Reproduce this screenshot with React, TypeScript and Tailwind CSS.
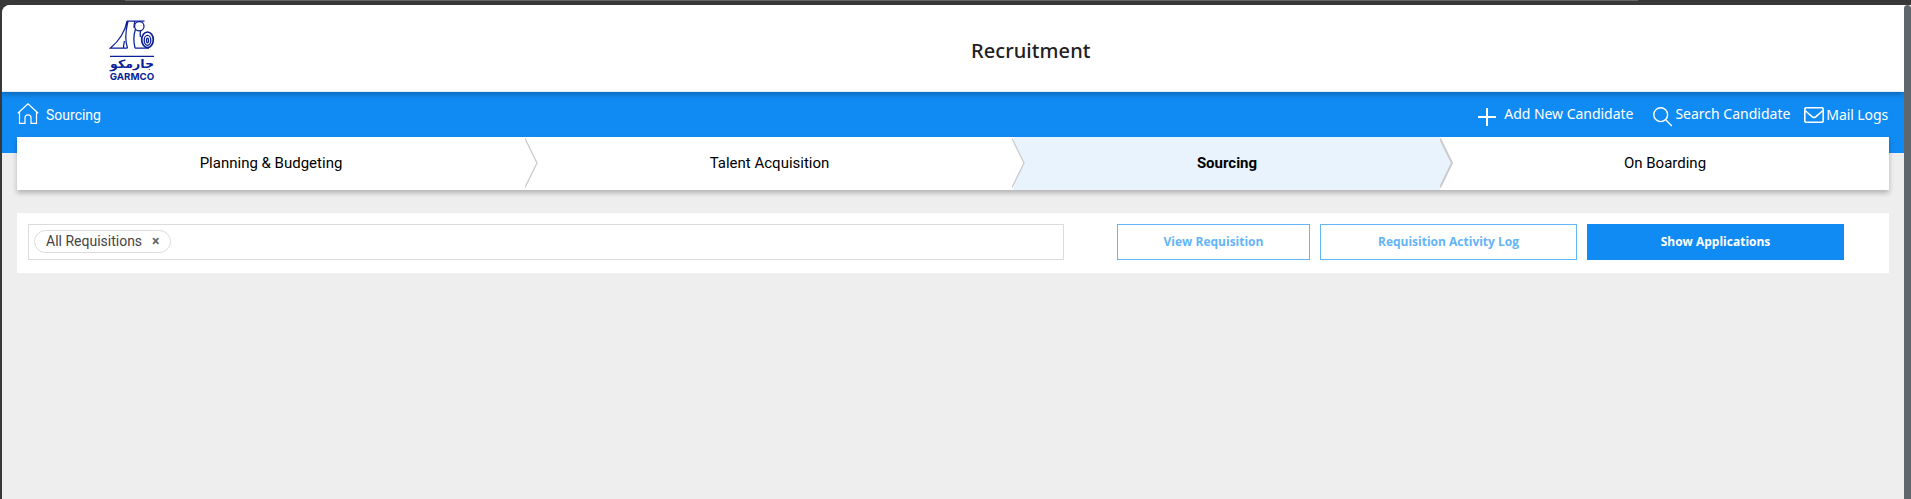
import React from "react";

function Logo() {
  return (
    <svg width="46" height="63" viewBox="0 0 46 63" fill="none" stroke="#0b1f97" strokeWidth="1.25">
      <path d="M18 2H35.500M18 2C16 13 10 22 1.500 29H18.500M19 2C16.500 12 16 22 18.500 29M26.500 10C24.500 16 24.500 23 26 29M14.500 29C14.500 26 14.800 25 15.500 22M26 29H40M26 2C25.200 4 25 7 25.200 9" />
      <circle cx="30.300" cy="7.200" r="4.700" />
      <path d="M31.500 12C31 14 31 16 31.500 18" />
      <ellipse cx="38.500" cy="20.800" rx="5.800" ry="7.800" strokeWidth="1.700" />
      <ellipse cx="38.500" cy="21.300" rx="3.300" ry="5" strokeWidth="1.300" />
      <ellipse cx="38.500" cy="21.500" rx="1" ry="2.300" strokeWidth="1.300" />
      <path d="M1 37.300H45" strokeWidth="1.300" />
      <text x="23" y="48.600" textAnchor="middle" textLength="44" lengthAdjust="spacingAndGlyphs" fill="#0b1f97" stroke="none" fontFamily="DejaVu Sans, sans-serif" fontWeight="700" fontSize="11.500">جارمكو</text>
      <text x="23" y="61" textAnchor="middle" textLength="44.500" lengthAdjust="spacingAndGlyphs" fill="#0b1f97" stroke="none" fontFamily="Inter, sans-serif" fontWeight="700" fontSize="9.600">GARMCO</text>
    </svg>
  );
}

function HomeIcon() {
  return (
    <svg width="22" height="22" viewBox="0 0 22 22" fill="none" stroke="white" strokeWidth="1.200">
      <path d="M.8 10.300L11 .8l10.200 9.500M2.500 9v11.400h5.500v-5.500c0-4 6-4 6 0v5.500h5.500V9" />
    </svg>
  );
}

function PlusIcon() {
  return (
    <svg width="18" height="18" viewBox="0 0 18 18" stroke="white" strokeWidth="2">
      <path d="M0 9h18M9 0v18" />
    </svg>
  );
}

function SearchIcon() {
  return (
    <svg width="20" height="20" viewBox="0 0 20 20" fill="none" stroke="white" strokeWidth="1.400">
      <circle cx="7.700" cy="7.700" r="6.900" />
      <path d="M12.500 12.500l6.300 6.500" />
    </svg>
  );
}

function MailIcon() {
  return (
    <svg width="20" height="16" viewBox="0 0 20 16" fill="none" stroke="white" strokeWidth="1.600">
      <rect x=".8" y=".8" width="18.400" height="14.400" rx="1.200" />
      <path d="M1 3.500l7.300 6.300c1.200 1 2.200 1 3.400 0L19 3.500" />
    </svg>
  );
}

function Chevron({ bold = false }: { bold?: boolean }) {
  return (
    <svg className="absolute top-px -right-[13px] z-10" width="13" height="50" viewBox="0 0 13 50" fill="none" stroke="#cbcbcb" strokeWidth={bold ? 2 : 1.3}>
      {bold && <path d="M0 1L11.500 25L0 49Z" fill="#e8f3fe" stroke="none" />}
      <path d="M0 .5L12 25L0 49.500" />
    </svg>
  );
}

export default function App() {
  return (
    <div className="flex h-[499px] w-full flex-col bg-[#383838] font-['Roboto',sans-serif]">
      <div className="h-[5px] shrink-0 pl-[125px]">
        <div className="h-px w-[1513px] bg-[#666]" />
      </div>
      <div className="flex min-h-0 grow pl-0.5">
        <div className="flex min-w-0 grow flex-col overflow-hidden rounded-tl-lg bg-[#eee]">
          <header className="relative z-10 flex h-[87px] shrink-0 items-start border-b border-[#e4eef8] bg-white shadow-[0_2px_6px_rgba(0,0,0,0.3)]">
            <div className="ml-[107px] mt-[14px] w-[46px]"><Logo /></div>
            <h1 className="ml-[816px] mt-[31px] font-['Noto_Sans',sans-serif] text-[20px] leading-[30px] font-medium tracking-[0.08px] text-[#212121]">Recruitment</h1>
          </header>
          <nav className="flex h-[61px] shrink-0 items-start bg-[#118bf4] text-white">
            <div className="mt-[11px] ml-[15px] flex items-start">
              <HomeIcon />
              <span className="mt-px ml-[7px] text-[14px] leading-[22px]">Sourcing</span>
            </div>
            <div className="mt-[11px] mr-[16px] ml-auto flex items-start font-['Noto_Sans',sans-serif] text-[14px] leading-[22px]">
              <div className="flex"><span className="mt-[5px]"><PlusIcon /></span><span className="ml-[8px] tracking-[-0.03px]">Add New Candidate</span></div>
              <div className="ml-5 flex"><span className="mt-[4px]"><SearchIcon /></span><span className="ml-0.5">Search Candidate</span></div>
              <div className="ml-[14px] flex"><span className="mt-[4px]"><MailIcon /></span><span className="mt-px ml-[2px] tracking-[-0.1px]">Mail Logs</span></div>
            </div>
          </nav>
          <div className="relative z-10 mx-[15px] -mt-4 flex h-[53px] shrink-0 bg-white text-[15px] text-black shadow-[0_3px_5px_rgba(0,0,0,0.25)]">
            <div className="relative flex w-[508px] items-center justify-center">Planning &amp; Budgeting<Chevron /></div>
            <div className="relative flex w-[489px] items-center justify-center">Talent Acquisition
              <svg className="absolute top-px right-[-11px] z-10" width="13" height="50" viewBox="0 0 13 50" fill="none">
                <path d="M0 0L12 25L0 50Z" fill="white" />
                <path d="M0 .5L12 25L0 49.500" stroke="#cbcbcb" strokeWidth="1.300" />
              </svg>
            </div>
            <div className="relative flex w-[426px] items-center justify-center bg-[#e8f3fe] font-bold">Sourcing<Chevron bold /></div>
            <div className="flex grow items-center justify-center pl-px">On Boarding</div>
          </div>
          <section className="mx-[15px] mt-[23px] flex h-[60px] shrink-0 items-center bg-white pb-[2px] pl-[11px] font-['Open_Sans',sans-serif] text-[12px] font-bold">
            <div className="flex h-9 w-[1036px] items-start border border-[#dcdcdc] pt-[5px] pl-[5px]">
              <div className="flex h-[23px] w-[137px] items-center rounded-full border border-[#dcdcdc] pl-[11px] font-['Roboto',sans-serif] text-[14px] font-normal text-[#444]">
                All Requisitions
                <span className="ml-[10px] text-[14px] font-bold text-[#666]">×</span>
              </div>
            </div>
            <button className="ml-[53px] h-9 w-[193px] border border-[#64b4f8] text-[#64b4f8]">View Requisition</button>
            <button className="ml-[10px] h-9 w-[257px] border border-[#64b4f8] text-[#64b4f8]">Requisition Activity Log</button>
            <button className="ml-[10px] h-9 w-[257px] bg-[#118bf4] text-white">Show Applications</button>
          </section>
        </div>
        <div className="w-[7px] shrink-0 bg-white"><div className="h-full rounded-t-full bg-[#5f676d]" /></div>
      </div>
    </div>
  );
}
